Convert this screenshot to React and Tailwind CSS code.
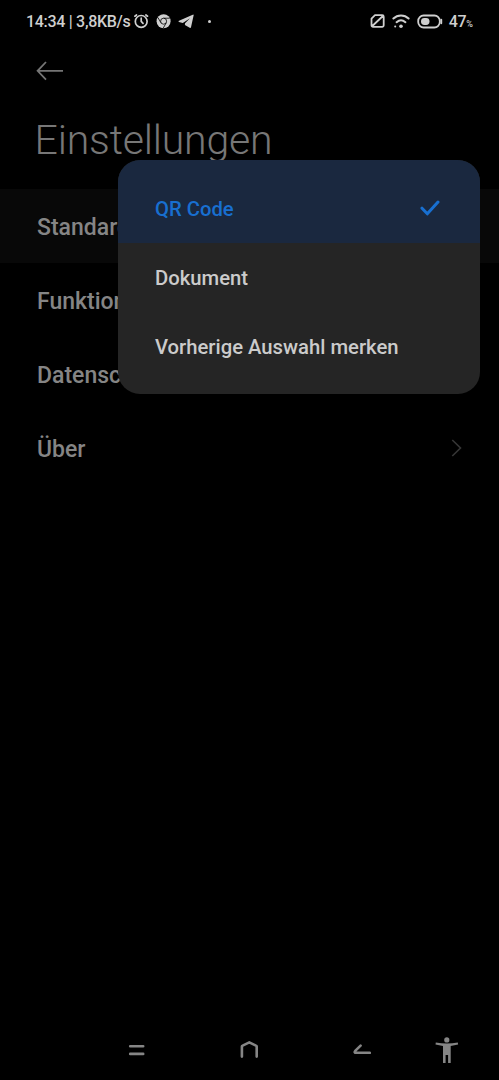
import React, { useState } from 'react';

const StatusBar = () => (
  <div className="flex h-[42px] items-center text-[#cfcfcf]">
    <span className="ml-[26px] w-[108px] whitespace-nowrap pt-[2px] text-[16px] leading-none tracking-[-0.3px]">14:34 | 3,8KB/s</span>
    {/* alarm */}
    <svg className="h-4 w-4 shrink-0" viewBox="0 0 16 16" fill="none" stroke="currentColor" strokeWidth="1.7" strokeLinecap="round">
      <circle cx="7.2" cy="8.4" r="5.9" />
      <path d="M.9 3.2 2.5 2M13.5 3.2 11.9 2M7.2 5.2v3.2l1.8 2" />
    </svg>
    {/* chrome */}
    <svg className="ml-[6px] h-4 w-4 shrink-0" viewBox="0 0 16 16">
      <circle cx="7.6" cy="8.2" r="7" fill="currentColor" />
      <circle cx="7.6" cy="8.2" r="3" fill="none" stroke="#000" strokeWidth="0.8" />
      <path d="M7.6 5.2H13.8M4.9 9.7 1.9 4.5M10.3 9.7 7.3 15" stroke="#000" strokeWidth="0.8" />
    </svg>
    {/* telegram */}
    <svg className="ml-[6px] h-4 w-4 shrink-0" viewBox="0 0 16 16" fill="currentColor">
      <path d="M15.3 1.6 1 7.8c-.6.3-.6.9 0 1.1l3.8 1.2L12 5.2 7 10.2l-.1 1.7 4.8 2.8c.6.4 1.1.2 1.3-.5L15.7 2.1z" />
    </svg>
    <span className="ml-[14px] h-[3px] w-[3px] rounded-full bg-[#cfcfcf]" />

    {/* no sim */}
    <svg className="ml-auto h-4 w-4 shrink-0" viewBox="0 0 16 16" fill="none" stroke="currentColor" strokeWidth="1.8" strokeLinejoin="round">
      <path d="M5 2.2H12.2a1.5 1.5 0 0 1 1.5 1.5v8.6a1.5 1.5 0 0 1-1.5 1.5H3A1.5 1.5 0 0 1 1.5 12.3V5.7zM1.8 13.5 13.4 2.5" />
    </svg>
    {/* wifi */}
    <svg className="ml-[6px] mr-[1px] h-4 w-[18px] shrink-0" viewBox="0 0 18 16" fill="none" stroke="currentColor" strokeWidth="2" strokeLinecap="round">
      <path d="M1.4 5.5C5.5 1.4 12.5 1.4 16.6 5.5M4.6 9.2c2.8-2.5 6-2.5 8.8 0" />
      <circle cx="9" cy="13.3" r="1.8" fill="currentColor" stroke="none" />
      <circle cx="3.2" cy="13.5" r="1" fill="currentColor" stroke="none" />
    </svg>
    {/* battery */}
    <svg className="ml-[6px] h-[15px] w-[26px] shrink-0" viewBox="0 0 26 15" fill="none" stroke="currentColor" strokeWidth="1.8">
      <rect x="1.2" y="1.5" width="21.6" height="12" rx="5.4" />
      <rect x="4" y="4" width="8.5" height="7" rx="3.4" fill="currentColor" stroke="none" />
      <path d="M24.3 5.7v3.6" strokeLinecap="round" />
    </svg>
    <span className="ml-[6px] mr-[26px] flex items-baseline pt-[2px] leading-none">
      <span className="text-[16px] tracking-[-0.3px]">47</span>
      <span className="text-[9px]">%</span>
    </span>
  </div>
);

const NavBar = () => (
  <div className="mt-auto flex h-[60px] items-center text-[#858585]">
    <svg className="ml-[128px] h-6 w-[18px]" viewBox="0 0 18 24" stroke="currentColor" strokeWidth="2.6" strokeLinecap="round">
      <path d="M2.2 8.2h13M2.2 15.9h13" />
    </svg>
    <svg className="ml-[92px] h-6 w-[24px]" viewBox="0 0 24 24" fill="none" stroke="currentColor" strokeWidth="2.6" strokeLinecap="round" strokeLinejoin="round">
      <path d="M3.9 18.6V8.6Q3.9 7.9 4.6 7.6L11.3 4.4 18 7.6Q18.7 7.9 18.7 8.6V18.6" />
    </svg>
    <svg className="ml-[91px] h-6 w-[18px]" viewBox="0 0 18 24" fill="none" stroke="currentColor" strokeWidth="2.6" strokeLinecap="round" strokeLinejoin="round">
      <path d="M7.6 7.6 2.2 12.9q-1.4 1.9 1 1.9H16.8" />
    </svg>
    {/* accessibility */}
    <svg className="ml-[64px] h-[26px] w-[24px]" viewBox="0 0 24 26" fill="currentColor">
      <circle cx="11.8" cy="2.9" r="2.6" />
      <path d="M.8 5.4Q11.8 7.4 22.8 5.4l.3 2.2-7.4 1.4V26h-2.6v-8h-2.5v8H8V9L.5 7.6z" />
    </svg>
  </div>
);

const rows = ['Standard', 'Funktionen', 'Datenschutz', 'Über'];
const options = ['QR Code', 'Dokument', 'Vorherige Auswahl merken'];

const optionClass = [
  'h-[83px] pt-[14px]',
  'h-[69px]',
  'h-[82px] pb-[14px]',
];

const App = () => {
  const [selected, setSelected] = useState('QR Code');

  return (
    <div className="relative flex h-[1080px] w-[499px] flex-col overflow-hidden bg-black font-['Roboto',sans-serif] font-medium">
      <StatusBar />
      <button className="ml-[36px] mt-[19px] h-5 w-7 text-[#757575]">
        <svg className="h-5 w-7" viewBox="0 0 28 20" fill="none" stroke="currentColor" strokeWidth="1.8">
          <path d="M27 9.8H1.8M10 1 1.6 9.8 10 18.6" />
        </svg>
      </button>
      <h1 className="ml-[34.5px] mt-[35px] h-[73px] text-[41px] font-light leading-[48px] tracking-[-0.18px] text-[#777777]">Einstellungen</h1>

      <ul>
        {rows.map((row, i) => (
          <li
            key={row}
            className={`flex h-[74px] items-center justify-between pl-[37px] pr-[37px] text-[23px] text-[#858585] ${i === 0 ? 'bg-[#080808]' : ''}`}
          >
            <span className="pt-[4px]">{row}</span>
            {row === 'Über' && (
              <svg className="h-[18px] w-[11px] text-[#363636]" viewBox="0 0 11 18" fill="none" stroke="currentColor" strokeWidth="1.6">
                <path d="M1.3 1 9.5 9l-8.2 8" />
              </svg>
            )}
          </li>
        ))}
      </ul>

      <NavBar />

      <div className="absolute left-[118px] top-[160px] w-[362px] overflow-hidden rounded-[22px] bg-[#252525]">
        {options.map((option, i) => (
          <button
            key={option}
            onClick={() => setSelected(option)}
            className={`flex w-full items-center justify-between pl-[37px] pr-[40px] text-[20.25px] ${optionClass[i]} ${
              selected === option ? 'bg-[#1a283f] text-[#186fd0]' : 'text-[#cbcbcb]'
            }`}
          >
            <span className="pt-[2px]">{option}</span>
            {selected === option && (
              <svg className="mb-[2px] h-4 w-5" viewBox="0 0 20 16" fill="none" stroke="currentColor" strokeWidth="3" strokeLinecap="round" strokeLinejoin="round">
                <path d="M2 8.2 7.3 13.8 18 2" />
              </svg>
            )}
          </button>
        ))}
      </div>
    </div>
  );
};

export default App;
